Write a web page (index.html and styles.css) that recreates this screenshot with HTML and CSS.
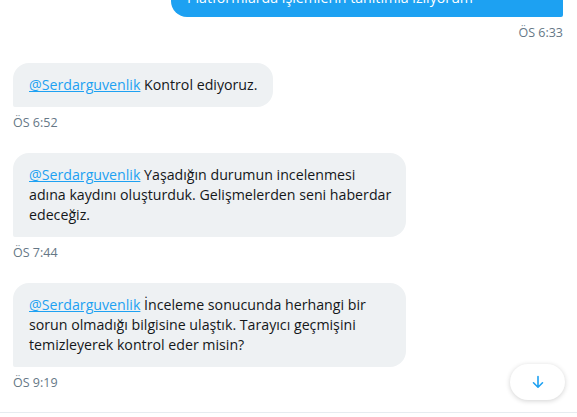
FILE: index.html
```html
<!DOCTYPE html>
<html lang="tr">
<head>
<meta charset="utf-8">
<link rel="stylesheet" href="styles.css">
</head>
<body>
<div class="conversation">
  <div class="messages">
    <div class="msg sent">
      <div class="bubble blue">Platformlarda işlemlerin tanıtımla izliyorum</div>
      <div class="time">ÖS 6:33</div>
    </div>
    <div class="msg received">
      <div class="bubble gray"><a class="mention">@Serdarguvenlik</a> Kontrol ediyoruz.</div>
      <div class="time">ÖS 6:52</div>
    </div>
    <div class="msg received">
      <div class="bubble gray full"><a class="mention">@Serdarguvenlik</a> Yaşadığın durumun incelenmesi<br>adına kaydını oluşturduk. Gelişmelerden seni haberdar<br>edeceğiz.</div>
      <div class="time">ÖS 7:44</div>
    </div>
    <div class="msg received">
      <div class="bubble gray full"><a class="mention">@Serdarguvenlik</a> İnceleme sonucunda herhangi bir<br>sorun olmadığı bilgisine ulaştık. Tarayıcı geçmişini<br>temizleyerek kontrol eder misin?</div>
      <div class="time">ÖS 9:19</div>
    </div>
  </div>
  <button class="scroll-down" aria-label="Aşağı kaydır">
    <svg width="16" height="16" viewBox="0 0 16 16"><path d="M8 2.5v10.5M3.5 8.8L8 13.2l4.5-4.4" fill="none" stroke="#1DA1F2" stroke-width="1.6" stroke-linecap="round" stroke-linejoin="round"/></svg>
  </button>
  <div class="composer-edge"></div>
</div>
</body>
</html>
```

FILE: styles.css
```css
html, body {
  margin: 0;
  padding: 0;
  background: #ffffff;
  overflow: hidden;
}
body {
  font-family: "Open Sans", "Noto Sans", sans-serif;
  color: #14171A;
}
.conversation {
  position: relative;
  height: 417px;
  overflow: hidden;
}
.messages {
  display: flex;
  flex-direction: column;
  padding: 0 14px 0 13px;
  margin-top: -27px;
  height: 439px;
}
.msg {
  display: flex;
  flex-direction: column;
  margin-bottom: 22px;
}
.msg.sent { align-items: flex-end; }
.msg.received { align-items: flex-start; }
.bubble {
  font-size: 14.2px;
  line-height: 20px;
  padding: 12px 16px;
  max-width: 361px;
}
.bubble.full {
  width: 361px;
  white-space: nowrap;
}
.bubble.blue {
  background: #1DA1F2;
  color: #ffffff;
  width: 360px;
  padding: 15px 16px 9px;
  border-radius: 16px 16px 2px 16px;
}
.bubble.gray {
  background: #EEF1F3;
  border-radius: 16px 16px 16px 2px;
}
.mention {
  color: #1DA1F2;
  text-decoration: underline;
}
.time {
  margin-top: 8px;
  font-size: 12.5px;
  line-height: 16px;
  color: #657786;
}
.scroll-down {
  position: absolute;
  left: 510px;
  top: 364px;
  width: 55px;
  height: 36px;
  border: none;
  border-radius: 18px;
  background: #ffffff;
  box-shadow: 0 1px 5px rgba(0,0,0,0.18);
  display: flex;
  align-items: center;
  justify-content: center;
  padding: 0;
}
.composer-edge {
  position: absolute;
  left: 0;
  right: 0;
  top: 412px;
  height: 5px;
  border-top: 1px solid #E6ECF0;
}
```
